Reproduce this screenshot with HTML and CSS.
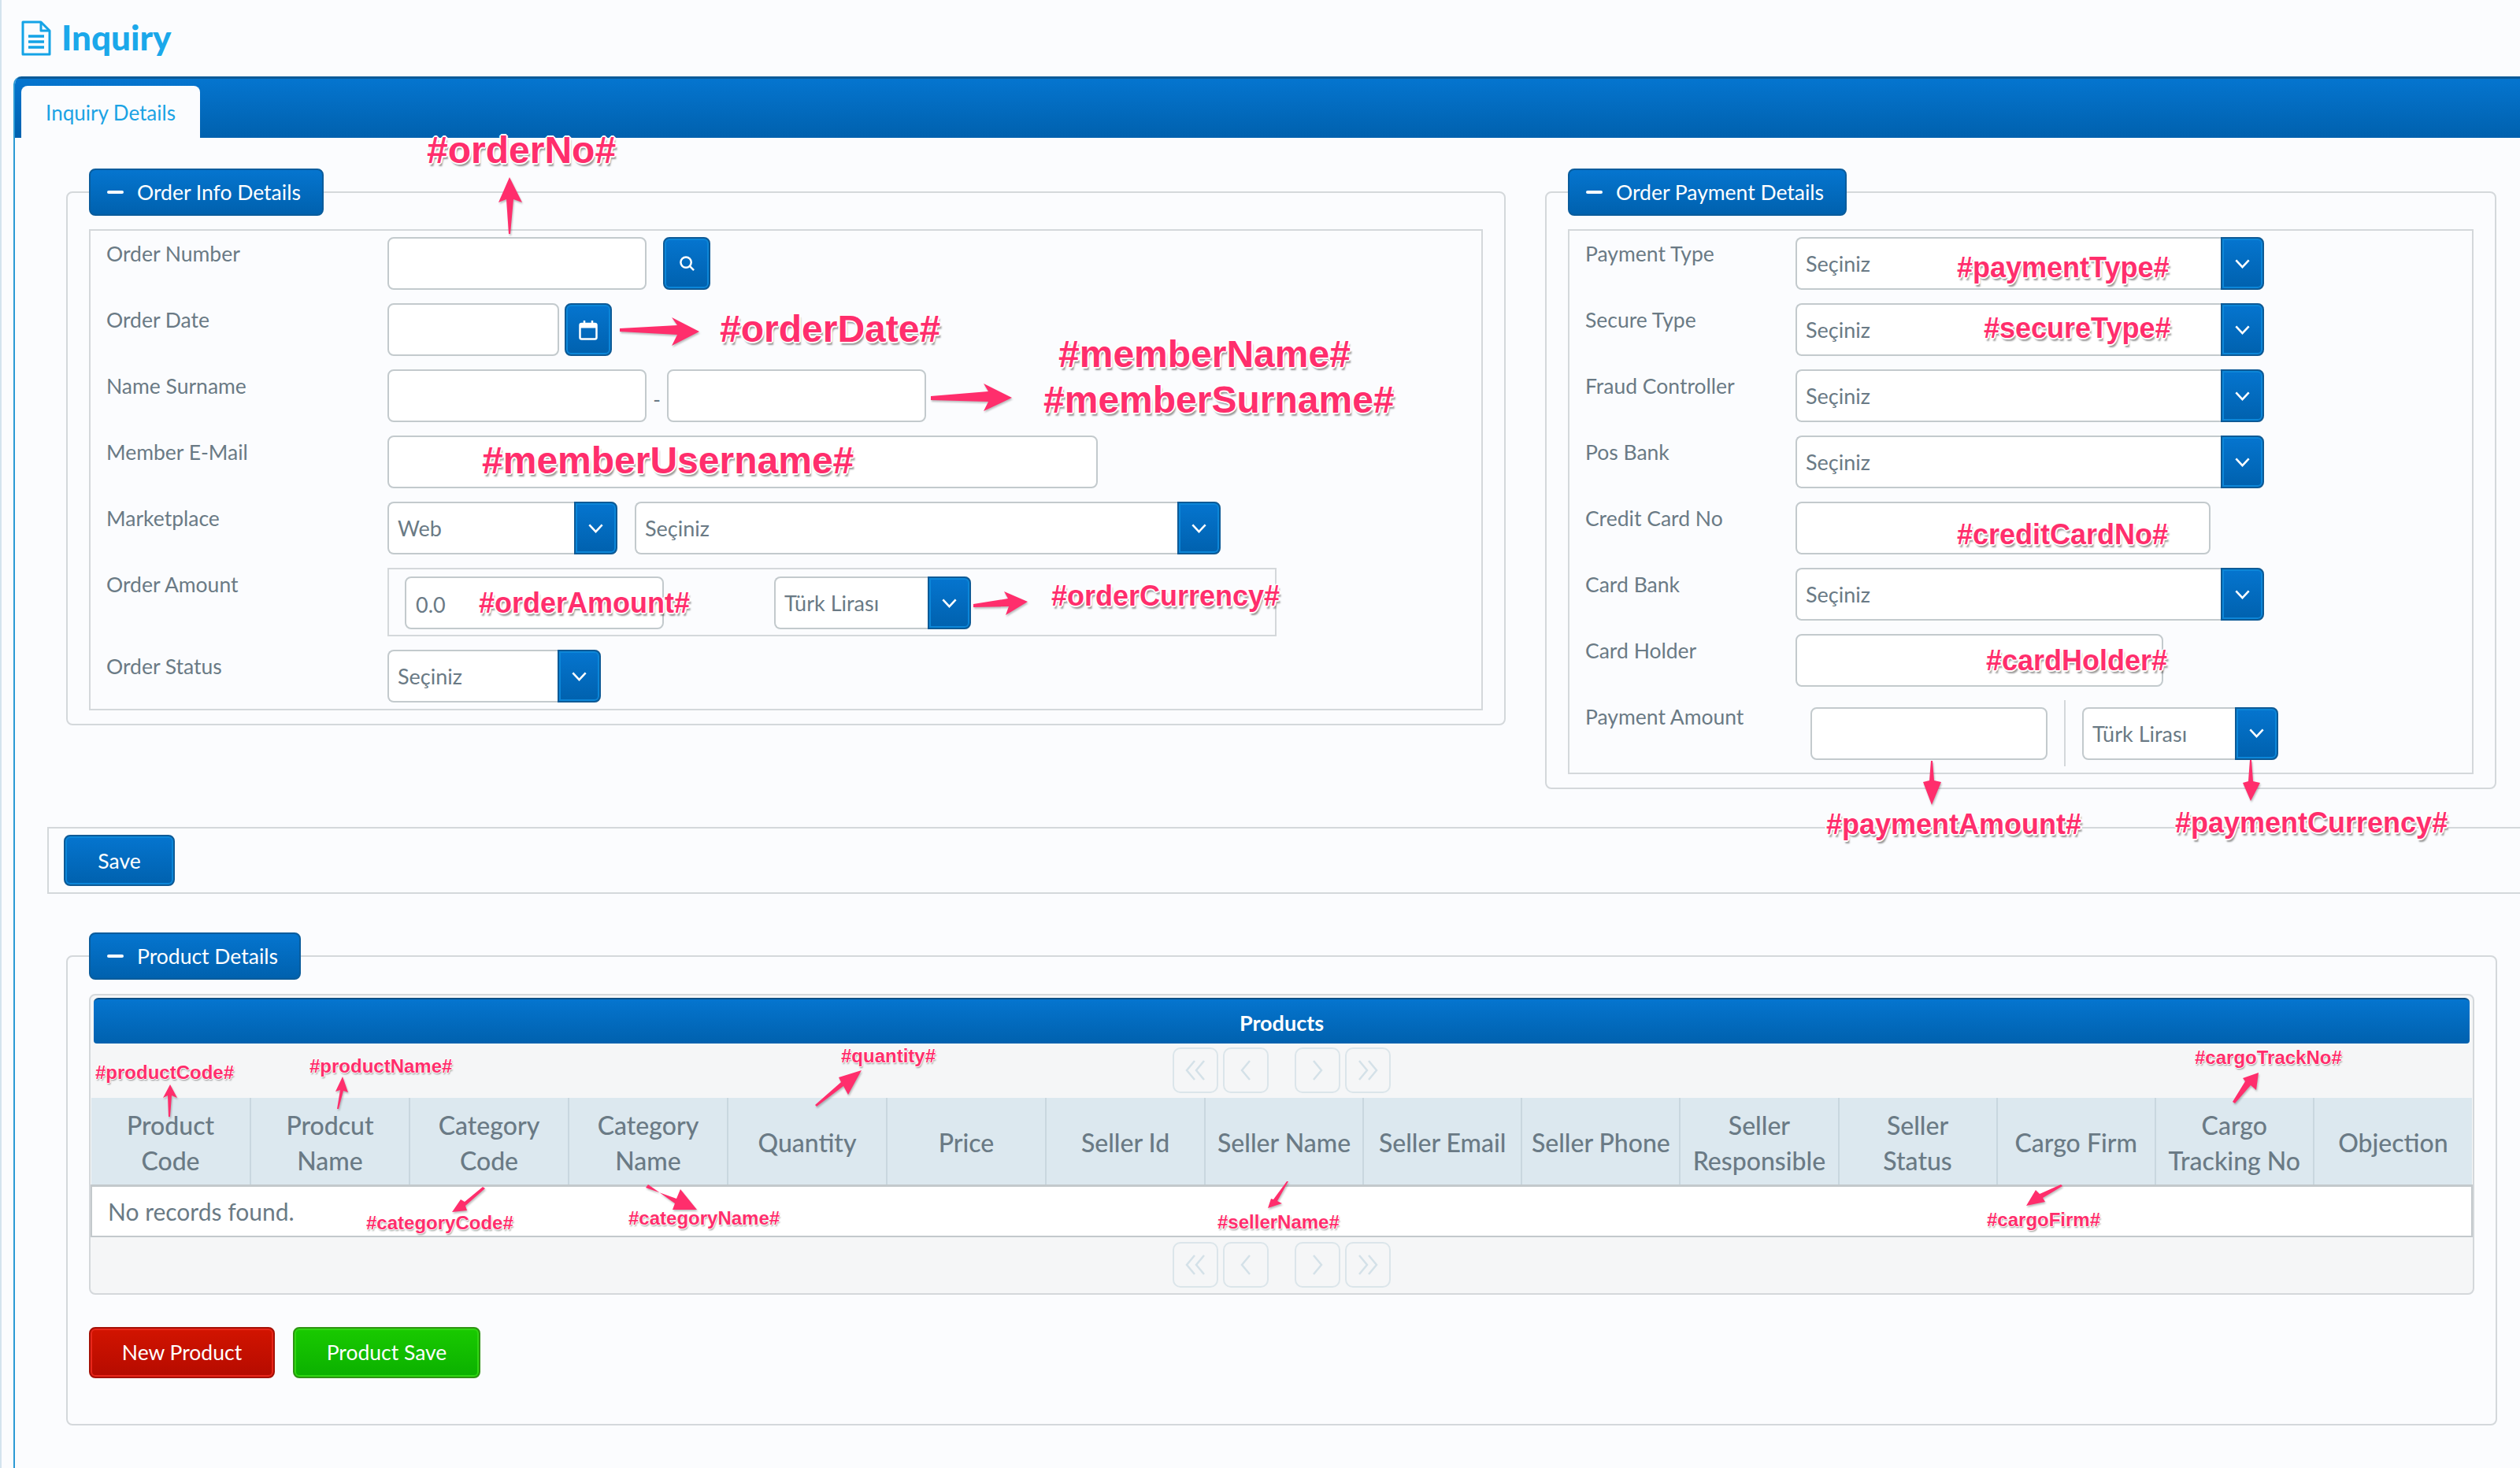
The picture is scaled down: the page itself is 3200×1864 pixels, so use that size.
FILE: index.html
```html
<!DOCTYPE html>
<html lang="en">
<head>
  <meta charset="UTF-8">
  <title>Inquiry</title>
  <link rel="stylesheet" href="styles.css">
</head>
<body>

  <header class="page-title">
    <svg class="doc-icon" viewBox="0 0 38 45" fill="none" stroke="#14a3e6" stroke-width="3">
      <path d="M2 2 H25 L36 13 V43 H2 Z" stroke-linejoin="round"/>
      <path d="M25 2 V13 H36" stroke-linejoin="round"/>
      <path d="M9 20 H29 M9 27 H29 M9 34 H29" stroke-width="3.5"/>
    </svg>
    <h1>Inquiry</h1>
  </header>

  <div class="tabview">
    <div class="tabbar">
      <div class="tab">Inquiry Details</div>
    </div>

    <div class="tab-content">
      <div class="top-row">

        <fieldset class="box box-order">
          <legend><span class="minus"></span>Order Info Details</legend>
          <div class="form-panel">
            <div class="row">
              <label>Order Number</label>
              <input class="txt w-329" type="text">
              <button class="icon-btn search-btn">
                <svg viewBox="0 0 22 22" fill="none" stroke="#fff" stroke-width="2.6"><circle cx="9.5" cy="9.5" r="7"/><path d="M14.5 14.5 L20 20"/></svg>
              </button>
            </div>
            <div class="row">
              <label>Order Date</label>
              <input class="txt w-218" type="text">
              <button class="icon-btn date-btn">
                <svg viewBox="0 0 24 26" fill="none" stroke="#fff" stroke-width="2.5"><rect x="1.5" y="5" width="21" height="19.5" rx="2"/><path d="M1.5 8 H22.5" stroke-width="5"/><path d="M7 1 V6 M17 1 V6"/></svg>
              </button>
            </div>
            <div class="row">
              <label>Name Surname</label>
              <input class="txt w-329" type="text">
              <span class="dash">-</span>
              <input class="txt w-329" type="text">
            </div>
            <div class="row">
              <label>Member E-Mail</label>
              <input class="txt w-902" type="text">
            </div>
            <div class="row">
              <label>Marketplace</label>
              <div class="select w-292">
                <span>Web</span>
                <i class="select-btn"><svg viewBox="0 0 18 12" fill="none" stroke="#fff" stroke-width="2.2"><path d="M2 2 L9 9.5 L16 2"/></svg></i>
              </div>
              <div class="select w-744 next-select">
                <span>Seçiniz</span>
                <i class="select-btn"><svg viewBox="0 0 18 12" fill="none" stroke="#fff" stroke-width="2.2"><path d="M2 2 L9 9.5 L16 2"/></svg></i>
              </div>
            </div>
            <div class="row row-amount">
              <label>Order Amount</label>
              <div class="amount-box">
                <div class="txt w-329 amount-value">0.0</div>
                <div class="select w-250">
                  <span>Türk Lirası</span>
                  <i class="select-btn"><svg viewBox="0 0 18 12" fill="none" stroke="#fff" stroke-width="2.2"><path d="M2 2 L9 9.5 L16 2"/></svg></i>
                </div>
              </div>
            </div>
            <div class="row">
              <label>Order Status</label>
              <div class="select w-271">
                <span>Seçiniz</span>
                <i class="select-btn"><svg viewBox="0 0 18 12" fill="none" stroke="#fff" stroke-width="2.2"><path d="M2 2 L9 9.5 L16 2"/></svg></i>
              </div>
            </div>
          </div>
        </fieldset>

        <fieldset class="box box-payment">
          <legend><span class="minus"></span>Order Payment Details</legend>
          <div class="form-panel">
            <div class="row">
              <label>Payment Type</label>
              <div class="select w-595">
                <span>Seçiniz</span>
                <i class="select-btn"><svg viewBox="0 0 18 12" fill="none" stroke="#fff" stroke-width="2.2"><path d="M2 2 L9 9.5 L16 2"/></svg></i>
              </div>
            </div>
            <div class="row">
              <label>Secure Type</label>
              <div class="select w-595">
                <span>Seçiniz</span>
                <i class="select-btn"><svg viewBox="0 0 18 12" fill="none" stroke="#fff" stroke-width="2.2"><path d="M2 2 L9 9.5 L16 2"/></svg></i>
              </div>
            </div>
            <div class="row">
              <label>Fraud Controller</label>
              <div class="select w-595">
                <span>Seçiniz</span>
                <i class="select-btn"><svg viewBox="0 0 18 12" fill="none" stroke="#fff" stroke-width="2.2"><path d="M2 2 L9 9.5 L16 2"/></svg></i>
              </div>
            </div>
            <div class="row">
              <label>Pos Bank</label>
              <div class="select w-595">
                <span>Seçiniz</span>
                <i class="select-btn"><svg viewBox="0 0 18 12" fill="none" stroke="#fff" stroke-width="2.2"><path d="M2 2 L9 9.5 L16 2"/></svg></i>
              </div>
            </div>
            <div class="row">
              <label>Credit Card No</label>
              <input class="txt w-527" type="text">
            </div>
            <div class="row">
              <label>Card Bank</label>
              <div class="select w-595">
                <span>Seçiniz</span>
                <i class="select-btn"><svg viewBox="0 0 18 12" fill="none" stroke="#fff" stroke-width="2.2"><path d="M2 2 L9 9.5 L16 2"/></svg></i>
              </div>
            </div>
            <div class="row">
              <label>Card Holder</label>
              <input class="txt w-467" type="text">
            </div>
            <div class="row row-payment">
              <label>Payment Amount</label>
              <input class="txt w-301 pay-input" type="text">
              <span class="divider"></span>
              <div class="select w-249">
                <span>Türk Lirası</span>
                <i class="select-btn"><svg viewBox="0 0 18 12" fill="none" stroke="#fff" stroke-width="2.2"><path d="M2 2 L9 9.5 L16 2"/></svg></i>
              </div>
            </div>
          </div>
        </fieldset>
      </div>

      <div class="save-bar">
        <button class="btn btn-blue">Save</button>
      </div>

      <fieldset class="box box-products">
        <legend><span class="minus"></span>Product Details</legend>
        <div class="datatable">
          <div class="dt-header">Products</div>
          <div class="paginator">
            <a class="page-btn"><svg class="pg-double" viewBox="0 0 26 26"><path d="M12 1 L2 13 L12 25 M24 1 L14 13 L24 25"/></svg></a>
            <a class="page-btn"><svg class="pg-single" viewBox="0 0 14 26"><path d="M12 1 L2 13 L12 25"/></svg></a>
            <span class="pages"></span>
            <a class="page-btn"><svg class="pg-single" viewBox="0 0 14 26"><path d="M2 1 L12 13 L2 25"/></svg></a>
            <a class="page-btn"><svg class="pg-double" viewBox="0 0 26 26"><path d="M2 1 L12 13 L2 25 M14 1 L24 13 L14 25"/></svg></a>
          </div>
          <table>
            <thead>
              <tr>
                <th>Product<br>Code</th>
                <th>Prodcut<br>Name</th>
                <th>Category<br>Code</th>
                <th>Category<br>Name</th>
                <th>Quantity</th>
                <th>Price</th>
                <th>Seller Id</th>
                <th>Seller Name</th>
                <th>Seller Email</th>
                <th>Seller Phone</th>
                <th>Seller<br>Responsible</th>
                <th>Seller<br>Status</th>
                <th>Cargo Firm</th>
                <th>Cargo<br>Tracking No</th>
                <th>Objection</th>
              </tr>
            </thead>
            <tbody>
              <tr><td colspan="15">No records found.</td></tr>
            </tbody>
          </table>
          <div class="paginator paginator-bottom">
            <a class="page-btn"><svg class="pg-double" viewBox="0 0 26 26"><path d="M12 1 L2 13 L12 25 M24 1 L14 13 L24 25"/></svg></a>
            <a class="page-btn"><svg class="pg-single" viewBox="0 0 14 26"><path d="M12 1 L2 13 L12 25"/></svg></a>
            <span class="pages"></span>
            <a class="page-btn"><svg class="pg-single" viewBox="0 0 14 26"><path d="M2 1 L12 13 L2 25"/></svg></a>
            <a class="page-btn"><svg class="pg-double" viewBox="0 0 26 26"><path d="M2 1 L12 13 L2 25 M14 1 L24 13 L14 25"/></svg></a>
          </div>
        </div>
        <div class="product-actions">
          <button class="btn btn-red">New Product</button>
          <button class="btn btn-green">Product Save</button>
        </div>
      </fieldset>
    </div>
  </div>

  <!-- annotations drawn over the form -->
  <svg class="arrows" viewBox="0 0 3200 1864">
    <path d="M646 297 L643 253 L633 257 L647 225 L663 257 L652 253 L648 297 Z"/>
    <path d="M787 417 L860 413 L853 403 L888 421 L853 439 L860 425 L787 421 Z"/>
    <path d="M1182 503 L1255 497 L1249 487 L1285 505 L1249 522 L1255 510 L1182 508 Z"/>
    <path d="M1236 767 L1280 760 L1275 751 L1305 764 L1277 781 L1281 770 L1236 771 Z"/>
    <path d="M2452 966 L2450 991 L2442 993 L2453 1022 L2465 993 L2456 991 L2454 966 Z"/>
    <path d="M2857 965 L2855 992 L2848 994 L2858 1017 L2870 994 L2861 992 L2859 965 Z"/>
    <path d="M214 1418 L213 1391 L207 1394 L216 1377 L225 1394 L218 1391 L216 1418 Z"/>
    <path d="M428 1408 L432 1384 L426 1386 L435 1367 L442 1387 L436 1385 L430 1408 Z"/>
    <path d="M1035 1403 L1068 1374 L1065 1368 L1094 1359 L1077 1390 L1071 1379 L1037 1405 Z"/>
    <path d="M613 1507 L590 1526 L585 1523 L574 1539 L593 1537 L591 1531 L616 1509 Z"/>
    <path d="M820 1508 L859 1522 L864 1510 L885 1536 L854 1536 L857 1528 L823 1504 Z"/>
    <path d="M1634 1500 L1617 1523 L1614 1522 L1610 1534 L1628 1528 L1622 1525 L1636 1500 Z"/>
    <path d="M2835 1399 L2851 1373 L2848 1369 L2868 1362 L2865 1384 L2858 1378 L2838 1401 Z"/>
    <path d="M2617 1504 L2590 1516 L2585 1511 L2573 1531 L2597 1526 L2594 1521 L2619 1506 Z"/>
  </svg>

  <div class="notes">
    <span class="note xl n-order-no">#orderNo#</span>
    <span class="note xl n-order-date">#orderDate#</span>
    <span class="note xl n-member-name">#memberName#</span>
    <span class="note xl n-member-surname">#memberSurname#</span>
    <span class="note xl n-member-username">#memberUsername#</span>
    <span class="note md n-order-amount">#orderAmount#</span>
    <span class="note md n-order-currency">#orderCurrency#</span>
    <span class="note md n-payment-type">#paymentType#</span>
    <span class="note md n-secure-type">#secureType#</span>
    <span class="note md n-credit-card">#creditCardNo#</span>
    <span class="note md n-card-holder">#cardHolder#</span>
    <span class="note md n-payment-amount">#paymentAmount#</span>
    <span class="note md n-payment-currency">#paymentCurrency#</span>
    <span class="note sm n-product-code">#productCode#</span>
    <span class="note sm n-product-name">#productName#</span>
    <span class="note sm n-quantity">#quantity#</span>
    <span class="note sm n-category-code">#categoryCode#</span>
    <span class="note sm n-category-name">#categoryName#</span>
    <span class="note sm n-seller-name">#sellerName#</span>
    <span class="note sm n-cargo-track">#cargoTrackNo#</span>
    <span class="note sm n-cargo-firm">#cargoFirm#</span>
  </div>

</body>
</html>
```

FILE: styles.css
```css
html, body {
  margin: 0;
  padding: 0;
  overflow: hidden;
}

body {
  position: relative;
  width: 3200px;
  height: 1864px;
  font-family: "Lato", "Liberation Sans", sans-serif;
  background-color: #fbfcfe;
  color: #6a7a85;
  border-left: 2px solid #d3e3ee;
  box-sizing: border-box;
}

.page-title {
  display: flex;
  align-items: center;
  gap: 13px;
  height: 97px;
  padding-left: 25px;
  box-sizing: border-box;
}

.doc-icon {
  width: 38px;
  height: 45px;
}

.page-title h1 {
  margin: 0 0 3px;
  font-size: 44px;
  font-weight: 900;
  color: #1ba8ea;
}

.tabview {
  height: 1767px;
  margin-left: 15px;
  border-left: 2px solid #2b9ad4;
  border-top-left-radius: 10px;
  overflow: hidden;
}

.tabbar {
  display: flex;
  align-items: flex-end;
  height: 78px;
  padding-left: 8px;
  box-sizing: border-box;
  border-top: 3px solid #0b5a98;
  background: linear-gradient(#0575cf, #0061ae);
}

.tab {
  width: 227px;
  height: 66px;
  line-height: 68px;
  text-align: center;
  font-size: 26px;
  color: #1ba3e4;
  background-color: #fbfcfe;
  border-radius: 8px 8px 0 0;
}

.tab-content {
  width: 3240px;
}

.top-row {
  display: flex;
  align-items: flex-start;
  gap: 50px;
  padding: 39px 0 0 65px;
}

.box {
  margin: 0;
  padding: 0 27px 17px;
  border: 2px solid #d4d8db;
  border-radius: 8px;
  box-sizing: border-box;
  min-width: 0;
}

.box-order {
  width: 1828px;
}

.box-payment {
  width: 1208px;
}

legend {
  display: flex;
  align-items: center;
  height: 60px;
  padding: 0 27px 0 21px;
  box-sizing: border-box;
  font-size: 26.5px;
  color: #fff;
  background: linear-gradient(#0575cf, #0061ae);
  border: 2px solid #0a5c9c;
  border-radius: 8px;
}

.minus {
  width: 21px;
  height: 4px;
  margin-right: 17px;
  background-color: #fff;
  border-radius: 2px;
}

.form-panel {
  margin-top: 17px;
  padding: 8px 0;
  border: 2px solid #d4d8db;
}

.row {
  display: flex;
  align-items: flex-start;
  height: 67px;
  margin-bottom: 17px;
  padding-left: 20px;
}

.row:last-child {
  margin-bottom: 0;
}

.row label {
  flex: none;
  width: 357px;
  padding-top: 8px;
  line-height: 26px;
  font-size: 26.5px;
}

.box-payment .row label {
  width: 267px;
}

.row-amount {
  height: 87px;
}

.row-payment {
  height: 84px;
  align-items: center;
}

.row-payment label {
  align-self: flex-start;
}

.txt {
  display: block;
  height: 67px;
  padding: 0 12px;
  border: 2px solid #c3cacd;
  border-radius: 8px;
  box-sizing: border-box;
  background-color: #fff;
  font-family: inherit;
  font-size: 27px;
  color: #6a7a85;
}

.w-218 { width: 218px; }
.w-249 { width: 249px; }
.w-250 { width: 250px; }
.w-271 { width: 271px; }
.w-292 { width: 292px; }
.w-301 { width: 301px; }
.w-329 { width: 329px; }
.w-467 { width: 467px; }
.w-527 { width: 527px; }
.w-595 { width: 595px; }
.w-744 { width: 744px; }
.w-902 { width: 902px; }

.icon-btn {
  width: 60px;
  height: 67px;
  padding: 0;
  display: flex;
  align-items: center;
  justify-content: center;
  background: linear-gradient(#0575cf, #0061ae);
  border: 2px solid #0d5a96;
  border-radius: 8px;
  box-shadow: inset 0 0 0 2px #0c86d8;
}

.search-btn {
  margin-left: 21px;
}

.search-btn svg {
  width: 21px;
  height: 21px;
}

.date-btn {
  margin-left: 7px;
}

.date-btn svg {
  width: 24px;
  height: 26px;
}

.dash {
  width: 26px;
  text-align: center;
  line-height: 76px;
  font-size: 26px;
}

.select {
  display: flex;
  align-items: stretch;
  height: 67px;
  box-sizing: border-box;
  border: 2px solid #c3cacd;
  border-right: none;
  border-radius: 8px;
  background-color: #fff;
  font-size: 27px;
}

.select span {
  flex: 1;
  padding: 2px 0 0 11px;
  line-height: 59px;
}

.next-select {
  margin-left: 22px;
}

.select-btn {
  flex: none;
  display: flex;
  align-items: center;
  justify-content: center;
  width: 55px;
  margin: -2px 0;
  box-sizing: border-box;
  background: linear-gradient(#0575cf, #0061ae);
  border: 2px solid #0d5a96;
  border-radius: 0 8px 8px 0;
  box-shadow: inset 0 0 0 2px #0c86d8;
}

.select-btn svg {
  width: 21px;
  height: 14px;
}

.amount-box {
  display: flex;
  gap: 140px;
  width: 1129px;
  height: 87px;
  padding: 9px 20px;
  box-sizing: border-box;
  border: 2px solid #d4d8db;
}

.amount-value {
  line-height: 67px;
}

.pay-input {
  margin-left: 19px;
  margin-right: 21px;
}

.divider {
  width: 2px;
  height: 84px;
  margin-right: 21px;
  background-color: #d4d8db;
}

.save-bar {
  margin: 48px 0 0 41px;
  padding: 8px 19px;
  height: 85px;
  box-sizing: border-box;
  border: 2px solid #d4d8db;
}

.btn {
  height: 65px;
  padding: 0;
  font-family: inherit;
  font-size: 26.5px;
  color: #fff;
  border-radius: 8px;
}

.btn-blue {
  width: 141px;
  background: linear-gradient(#0575cf, #0061ae);
  border: 2px solid #0d5a96;
  box-shadow: inset 0 0 0 2px #0c86d8;
}

.btn-red {
  width: 236px;
  background: linear-gradient(#d21400, #b50b00);
  border: 2px solid #a51005;
  box-shadow: inset 0 0 0 2px #e8261a;
}

.btn-green {
  width: 238px;
  margin-left: 23px;
  background: linear-gradient(#19ca00, #0bb000);
  border: 2px solid #2d9412;
  box-shadow: inset 0 0 0 2px #2fd612;
}

.box-products {
  width: 3087px;
  margin: 49px 0 0 65px;
  padding-bottom: 58px;
}

.datatable {
  margin-top: 18px;
  padding: 3px 0 0;
  border: 2px solid #d4d8db;
  border-radius: 8px;
  background-color: #f5f6f7;
}

.dt-header {
  height: 58px;
  margin: 0 4px;
  line-height: 60px;
  text-align: center;
  font-size: 27px;
  font-weight: 700;
  color: #fff;
  background: linear-gradient(#0575cf, #0061ae);
  border-top: 2px solid #0b4f86;
  border-radius: 6px 6px 4px 4px;
  box-sizing: border-box;
}

.paginator {
  display: flex;
  justify-content: center;
  gap: 6px;
  height: 69px;
  padding-top: 5px;
  box-sizing: border-box;
}

.paginator-bottom {
  height: 71px;
  padding-top: 6px;
}

.page-btn {
  display: flex;
  align-items: center;
  justify-content: center;
  width: 58px;
  height: 58px;
  border: 2px solid #dbe5ea;
  border-radius: 10px;
  box-sizing: border-box;
}

.page-btn svg {
  height: 26px;
  fill: none;
  stroke: #d4e1e8;
  stroke-width: 2.5;
}

.pg-double {
  width: 26px;
}

.pg-single {
  width: 14px;
}

.pages {
  width: 21px;
}

table {
  width: 100%;
  table-layout: fixed;
  border-collapse: collapse;
}

th {
  height: 111px;
  padding: 4px 0 0;
  box-sizing: border-box;
  font-size: 32px;
  font-weight: 500;
  line-height: 45px;
  color: #6a7a85;
  background-color: #dce8ef;
  border-right: 2px solid #c9d7df;
  border-bottom: 3px solid #c3c9cc;
}

th:nth-child(-n+7) {
  width: 202px;
}

th:last-child {
  border-right: none;
}

td {
  height: 62px;
  padding: 0 0 0 20px;
  font-size: 30px;
  background-color: #fff;
  border: 2px solid #c3c9cc;
  border-top: none;
}

.product-actions {
  display: flex;
  margin-top: 41px;
}

.arrows {
  position: absolute;
  left: -2px;
  top: 0;
  width: 3200px;
  height: 1864px;
  pointer-events: none;
  filter: drop-shadow(1px 2px 1px rgba(0, 0, 0, 0.25));
}

.arrows path {
  fill: #ff2e6c;
}

.notes {
  position: absolute;
  left: -2px;
  top: 0;
  width: 3200px;
  height: 1864px;
  pointer-events: none;
}

.note {
  position: absolute;
  font-family: "Liberation Sans", Arial, sans-serif;
  font-weight: 700;
  line-height: 1;
  white-space: nowrap;
  color: #ff2e6c;
  text-shadow:
    -2px 0 0 #fff, 2px 0 0 #fff, 0 -2px 0 #fff, 0 2px 0 #fff,
    -1px -1px 0 #fff, 1px 1px 0 #fff, 1px -1px 0 #fff, -1px 1px 0 #fff,
    2px 4px 2px rgba(0, 0, 0, 0.4);
}

.xl { font-size: 48px; }
.md { font-size: 36px; }
.sm { font-size: 24px; text-shadow: -1px 0 0 #fff, 1px 0 0 #fff, 0 -1px 0 #fff, 0 1px 0 #fff, 1px 2px 2px rgba(0, 0, 0, 0.4); }

.n-order-no { left: 542px; top: 167px; }
.n-order-date { left: 914px; top: 394px; }
.n-member-name { left: 1344px; top: 426px; }
.n-member-surname { left: 1325px; top: 484px; }
.n-member-username { left: 612px; top: 561px; }
.n-order-amount { left: 608px; top: 748px; }
.n-order-currency { left: 1335px; top: 739px; }
.n-payment-type { left: 2485px; top: 322px; }
.n-secure-type { left: 2519px; top: 399px; }
.n-credit-card { left: 2485px; top: 661px; }
.n-card-holder { left: 2522px; top: 821px; }
.n-payment-amount { left: 2319px; top: 1029px; }
.n-payment-currency { left: 2762px; top: 1027px; }
.n-product-code { left: 121px; top: 1350px; }
.n-product-name { left: 393px; top: 1342px; }
.n-quantity { left: 1068px; top: 1329px; }
.n-category-code { left: 465px; top: 1541px; }
.n-category-name { left: 798px; top: 1535px; }
.n-seller-name { left: 1546px; top: 1540px; }
.n-cargo-track { left: 2787px; top: 1331px; }
.n-cargo-firm { left: 2523px; top: 1537px; }
```
